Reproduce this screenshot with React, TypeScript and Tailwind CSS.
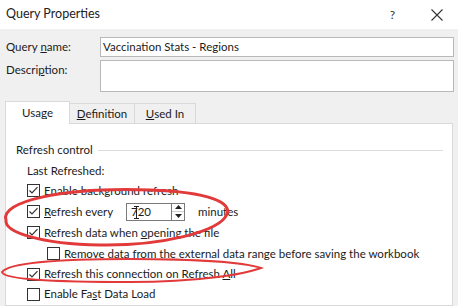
import React from "react"

const font = { fontFamily: 'Lato, "Noto Sans", sans-serif' }

function Check({ checked }: { checked?: boolean }) {
  return (
    <span className="w-[13px] h-[13px] border border-[#333333] bg-white flex items-center justify-center shrink-0">
      {checked && (
        <svg width="11" height="11" viewBox="0 0 11 11">
          <path d="M1.5 5.5 L4 8 L9.5 2.2" fill="none" stroke="#333333" strokeWidth="1.2" />
        </svg>
      )}
    </span>
  )
}

function Row({ checked, children, indent, h }: { checked?: boolean; children: React.ReactNode; indent?: boolean; h?: string }) {
  return (
    <div className={`flex items-center gap-[4px] ${h ?? "h-[21px]"} ${indent ? "pl-[41px]" : "pl-[21px]"}`}>
      <Check checked={checked} />
      <span className="leading-none whitespace-nowrap">{children}</span>
    </div>
  )
}

export default function App() {
  return (
    <div className="relative w-[458px] h-[306px] overflow-hidden bg-[#f0f0f0] text-[11.5px] text-[#1b1b1b] flex flex-col" style={font}>
      {/* title bar */}
      <div className="h-[29px] bg-white flex items-center pl-[6px] shrink-0">
        <span className="text-[12.5px] text-[#222]">Query Properties</span>
        <span className="ml-auto mr-[36px] text-[12px] text-[#333]">?</span>
        <svg className="mr-[15px]" width="12" height="12" viewBox="0 0 12 12">
          <path d="M0.5 0.5 L11.5 11.5 M11.5 0.5 L0.5 11.5" stroke="#333" strokeWidth="1.1" />
        </svg>
      </div>

      {/* name & description */}
      <div className="pl-[6px] pr-[4px] pt-[8px] flex flex-col gap-[3px]">
        <div className="flex items-center">
          <span className="w-[94px]">Query <u>n</u>ame:</span>
          <div className="w-[354px] h-[20px] border border-[#b9b9b9] bg-white flex items-center pl-[2px]">Vaccination Stats - Regions</div>
        </div>
        <div className="flex items-start">
          <span className="w-[94px] pt-[1px]">Descri<u>p</u>tion:</span>
          <div className="w-[354px] h-[32px] border border-[#b9b9b9] bg-white" />
        </div>
      </div>

      {/* tabs */}
      <div className="flex items-end pl-[5px] mt-[9px] h-[22px] shrink-0">
        <div className="w-[65px] h-[23px] bg-white border border-b-0 border-[#d9d9d9] flex items-center justify-center relative z-10 -mb-[1px]">
          Usa<u>g</u>e
        </div>
        <div className="w-[65px] h-[20px] border border-l-0 border-b-0 border-[#d9d9d9] flex items-center justify-center">
          <u>D</u>efinition
        </div>
        <div className="w-[61px] h-[20px] border border-l-0 border-b-0 border-[#d9d9d9] flex items-center justify-center">
          <u>U</u>sed In
        </div>
      </div>

      {/* panel */}
      <div className="ml-[5px] w-[448px] flex-1 bg-white border border-[#d9d9d9] pt-[17px]">
        <div className="flex items-center h-[18px] pl-[10px] pr-[9px] gap-[5px]">
          <span className="leading-none">Refresh control</span>
          <div className="flex-1 h-px bg-[#dcdcdc]" />
        </div>
        <div className="flex items-center h-[18px] pl-[21px] mt-[3px]">Last Refreshed:</div>
        <Row checked>Enable back<u>g</u>round refresh</Row>
        <div className="flex items-center gap-[4px] h-[21px] pl-[21px]">
          <Check checked />
          <span className="w-[78px] leading-none"><u>R</u>efresh every</span>
          <div className="flex">
            <div className="w-[45px] h-[18px] border border-[#7a7a7a] border-r-0 flex items-center pl-[4px] relative">
              720
              <span className="absolute left-[9px] top-[2px] w-px h-[13px] bg-[#222]" />
              <span className="absolute left-[7px] top-[2px] w-[5px] h-px bg-[#222]" />
              <span className="absolute left-[7px] top-[14px] w-[5px] h-px bg-[#222]" />
            </div>
            <div className="w-[14px] h-[18px] border border-[#7a7a7a] flex flex-col">
              <div className="flex-1 flex items-center justify-center border-b border-[#cfcfcf]">
                <svg width="7" height="4" viewBox="0 0 7 4"><path d="M3.5 0 L7 4 L0 4 Z" fill="#222" /></svg>
              </div>
              <div className="flex-1 flex items-center justify-center">
                <svg width="7" height="4" viewBox="0 0 7 4"><path d="M0 0 L7 0 L3.5 4 Z" fill="#222" /></svg>
              </div>
            </div>
          </div>
          <span className="ml-[9px] leading-none">minutes</span>
        </div>
        <Row checked>Refresh data when <u>o</u>pening the file</Row>
        <Row indent>Remove <u>d</u>ata from the external data range before saving the workbook</Row>
        <Row checked h="h-[20px]">Refresh this connection on Refresh <u>A</u>ll</Row>
        <Row h="h-[20px]">Enable Fa<u>s</u>t Data Load</Row>
      </div>

      {/* red annotation ellipses */}
      <svg className="absolute left-0 top-0 pointer-events-none" width="458" height="306" viewBox="0 0 458 306">
        <path
          d="M6 220 C 0 202, 60 187, 150 190 C 210 192, 232 203, 227 214 C 220 232, 160 246, 100 245 C 40 244, 4 232, 6 220"
          fill="none"
          stroke="#e23a3a"
          strokeWidth="3"
          strokeLinecap="round"
        />
        <path
          d="M2 272 C 10 262, 60 259, 130 259 C 200 259, 245 263, 261 268 C 245 274, 200 282, 130 282 C 60 282, 4 280, 2 272"
          fill="none"
          stroke="#e23a3a"
          strokeWidth="2"
          strokeLinecap="round"
        />
      </svg>
    </div>
  )
}
